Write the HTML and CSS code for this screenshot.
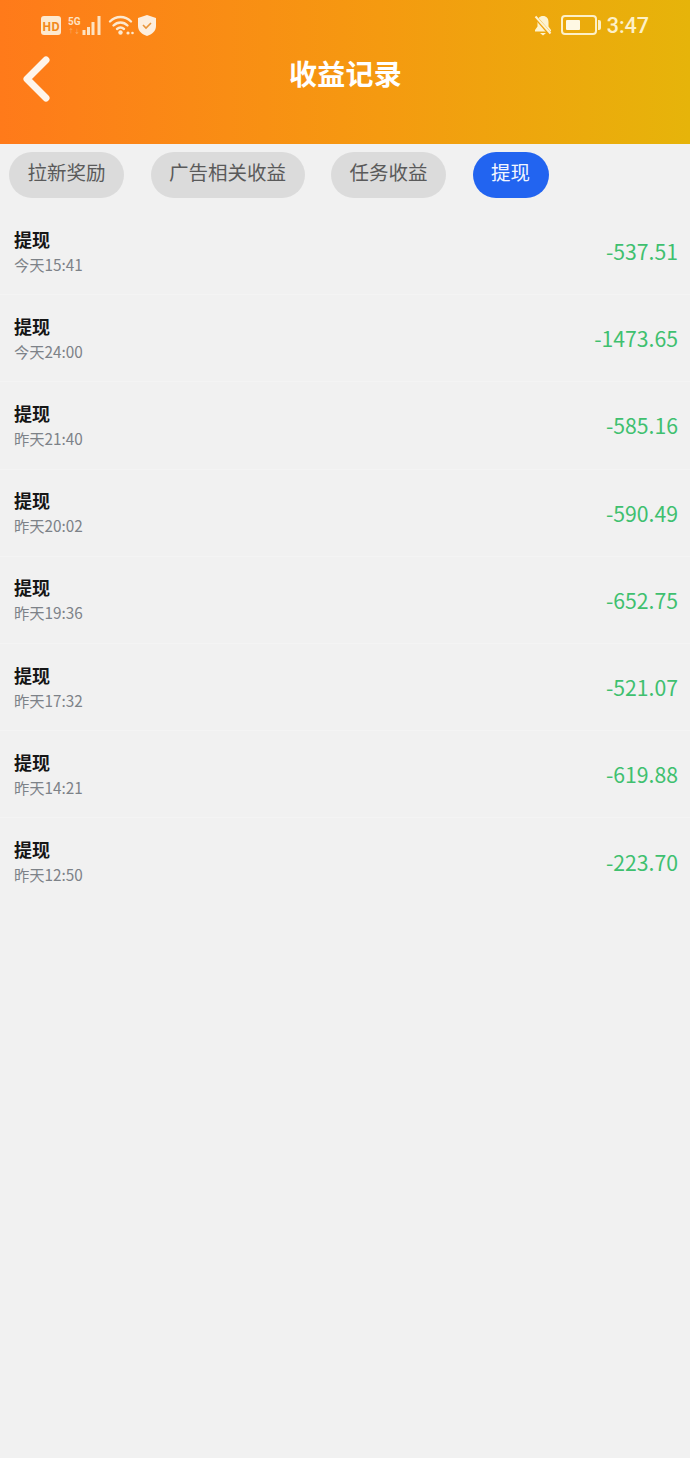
FILE: index.html
```html
<!DOCTYPE html>
<html lang="zh-CN">
<head>
  <meta charset="UTF-8">
  <title>收益记录</title>
  <link rel="stylesheet" href="styles.css">
</head>
<body>

  <header class="header">
    <div class="status-bar">
      <div class="status-left">
        <span class="hd">HD</span>
        <div class="net">
          <span class="net-type">5G</span>
          <span class="net-arrows">↑↓</span>
        </div>
        <svg class="signal" width="20" height="22" viewBox="0 0 20 22">
          <path d="M2 16v5M6.500 13v8M11 8v13M17 2v19" stroke="#fde3c2" stroke-width="3" fill="none"/>
        </svg>
        <svg class="wifi" width="26" height="22" viewBox="0 0 26 22">
          <path d="M2 7.500C8 1.500 17 1.500 23 7.500M5.500 11.500C9.500 7.500 15.500 7.500 19.500 11.500M9 15c2.200-2 4.800-2 7 0" stroke="#fde9cf" stroke-width="2.400" fill="none" stroke-linecap="round"/>
          <circle cx="12.500" cy="18.500" r="2.200" fill="#fde9cf"/>
          <circle cx="20" cy="19" r="1.600" fill="#fde9cf"/>
          <circle cx="24.500" cy="19" r="1.300" fill="#fde9cf"/>
        </svg>
        <svg class="shield" width="20" height="23" viewBox="0 0 20 23">
          <path d="M10 1l9 3v8c0 5-4 8.500-9 10C5 20.500 1 17 1 12V4z" fill="#fdeedd"/>
          <path d="M6 11l3 3 5-5" stroke="#e8953a" stroke-width="1.600" fill="none"/>
        </svg>
      </div>
      <div class="status-right">
        <svg class="bell" width="20" height="21" viewBox="0 0 20 21">
          <path d="M10 1c-3.500 0-5.500 2.500-5.500 6v4.500L2 15v1.500h16V15l-2.500-3.500V7c0-3.500-2-6-5.500-6z" fill="#fdf3d0"/>
          <path d="M7 18h6l-3 2.500z" fill="#fdf3d0"/>
          <path d="M1.500 1l16 18.500" stroke="#f0a30f" stroke-width="3.500"/>
          <path d="M2.500 1.500l15 17" stroke="#fdf3d0" stroke-width="2"/>
        </svg>
        <div class="battery"><div class="battery-level"></div></div>
        <div class="battery-tip"></div>
        <span class="clock">3:47</span>
      </div>
    </div>
    <div class="title-bar">
      <svg class="back" width="30" height="46" viewBox="0 0 30 46">
        <path d="M25 4L6 23l19 19" stroke="#fff5ea" stroke-width="7" fill="none" stroke-linecap="round" stroke-linejoin="round"/>
      </svg>
      <h1 class="title">收益记录</h1>
    </div>
  </header>

  <nav class="tabs">
    <div class="tab">拉新奖励</div>
    <div class="tab">广告相关收益</div>
    <div class="tab">任务收益</div>
    <div class="tab active">提现</div>
  </nav>

  <ul class="records">
    <li class="record">
      <div><div class="record-name">提现</div><div class="record-time">今天15:41</div></div>
      <div class="record-amount">-537.51</div>
    </li>
    <li class="record">
      <div><div class="record-name">提现</div><div class="record-time">今天24:00</div></div>
      <div class="record-amount">-1473.65</div>
    </li>
    <li class="record">
      <div><div class="record-name">提现</div><div class="record-time">昨天21:40</div></div>
      <div class="record-amount">-585.16</div>
    </li>
    <li class="record">
      <div><div class="record-name">提现</div><div class="record-time">昨天20:02</div></div>
      <div class="record-amount">-590.49</div>
    </li>
    <li class="record">
      <div><div class="record-name">提现</div><div class="record-time">昨天19:36</div></div>
      <div class="record-amount">-652.75</div>
    </li>
    <li class="record">
      <div><div class="record-name">提现</div><div class="record-time">昨天17:32</div></div>
      <div class="record-amount">-521.07</div>
    </li>
    <li class="record">
      <div><div class="record-name">提现</div><div class="record-time">昨天14:21</div></div>
      <div class="record-amount">-619.88</div>
    </li>
    <li class="record">
      <div><div class="record-name">提现</div><div class="record-time">昨天12:50</div></div>
      <div class="record-amount">-223.70</div>
    </li>
  </ul>

</body>
</html>
```

FILE: styles.css
```css
html, body {
  height: 100%;
}

body {
  margin: 0;
  overflow: hidden;
  background-color: #f1f1f1;
  font-family: "Noto Sans CJK SC", "Noto Sans", sans-serif;
}

.header {
  height: 144px;
  background: linear-gradient(90deg, #ff7a1a 0%, #f59a10 55%, #e6b40a 100%);
}

.status-bar {
  height: 50px;
  padding: 0 41px;
  display: flex;
  justify-content: space-between;
  align-items: center;
}

.status-left, .status-right {
  display: flex;
  align-items: center;
}

.hd {
  width: 20px;
  height: 19px;
  border-radius: 3px;
  background-color: #fde9cf;
  color: #f28a1c;
  font-size: 12px;
  font-weight: 700;
  line-height: 19px;
  text-align: center;
}

.net {
  width: 14px;
  margin-left: 7px;
  display: flex;
  flex-direction: column;
  align-items: flex-start;
}

.net-type {
  color: #fde3c2;
  font-family: "Roboto", sans-serif;
  font-size: 10px;
  font-weight: 700;
  line-height: 11px;
}

.net-arrows {
  color: #f9b56e;
  font-size: 6px;
  line-height: 8px;
}

.wifi {
  margin-left: 6px;
}

.shield {
  margin-left: 3px;
}

.bell {
  margin-right: 8px;
}

.battery {
  width: 36px;
  height: 20px;
  box-sizing: border-box;
  padding: 3px;
  border: 2px solid #fdf0c8;
  border-radius: 4px;
}

.battery-level {
  width: 55%;
  height: 100%;
  border-radius: 1px;
  background-color: #fef8e4;
}

.battery-tip {
  width: 3px;
  height: 10px;
  margin-left: 1px;
  border-radius: 0 2px 2px 0;
  background-color: #fdf0c8;
}

.clock {
  margin-left: 6px;
  color: #fdf0c8;
  font-family: "Roboto", sans-serif;
  font-size: 21.500px;
  font-weight: 500;
}

.title-bar {
  height: 50px;
  padding-left: 21px;
  display: flex;
  align-items: center;
  position: relative;
}

.back {
  flex-shrink: 0;
  margin-top: 8px;
}

.title {
  position: absolute;
  left: 0;
  right: 0;
  margin: 0 0 4px 1px;
  color: #fff;
  font-size: 28px;
  font-weight: 700;
  line-height: 40px;
  letter-spacing: 0.300px;
  text-align: center;
}

.tabs {
  display: flex;
  gap: 26.500px;
  padding: 8px 0 10px 9px;
}

.tab {
  height: 46px;
  padding: 0 18.500px 6px;
  box-sizing: border-box;
  border-radius: 23px;
  background-color: #dbdbdb;
  color: #5a5a5a;
  font-size: 19.500px;
  line-height: 40px;
}

.tab.active {
  background-color: #2264f0;
  color: #f2f6ff;
}

.records {
  margin: 0;
  padding: 0;
  list-style: none;
}

.record {
  height: 87.200px;
  box-sizing: border-box;
  padding: 0 12px 0 14px;
  display: flex;
  justify-content: space-between;
  align-items: center;
  border-bottom: 1px solid #f4f4f4;
}

.record:last-child {
  border-bottom: none;
}

.record-name {
  color: #161616;
  font-size: 18px;
  font-weight: 700;
  line-height: 25px;
}

.record-time {
  color: #7d8288;
  font-size: 15.300px;
  line-height: 24px;
}

.record-amount {
  color: #3fc06f;
  font-size: 21.200px;
  line-height: 28px;
}
```
